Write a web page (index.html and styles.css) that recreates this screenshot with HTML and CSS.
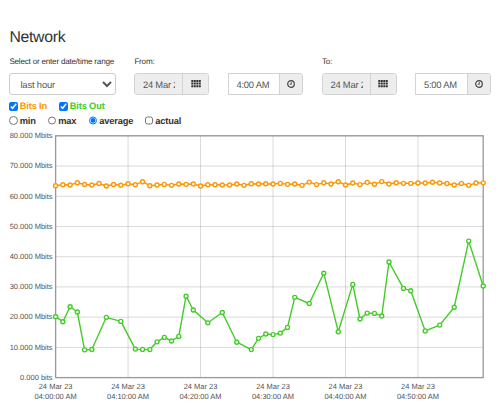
FILE: index.html
```html
<!DOCTYPE html>
<html lang="en">
<head>
    <meta charset="UTF-8">
    <meta name="viewport" content="width=device-width, initial-scale=1.0">
    <title>Network</title>
    <link rel="stylesheet" href="styles.css">
</head>
<body>
    <svg class="sprite">
        <symbol id="calendar" viewBox="0 0 10 8">
            <path d="M0.3 0h2v2h-2zM2.8 0h2v2h-2zM5.3 0h2v2h-2zM7.8 0h2v2h-2zM0.3 2.6h2v2h-2zM2.8 2.6h2v2h-2zM5.3 2.6h2v2h-2zM7.8 2.6h2v2h-2zM0.3 5.2h2v2h-2zM2.8 5.2h2v2h-2zM5.3 5.2h2v2h-2zM7.8 5.2h2v2h-2z" fill="#333"/>
        </symbol>
        <symbol id="clock" viewBox="0 0 8 8">
            <circle cx="4" cy="4" r="3.3" fill="none" stroke="#444" stroke-width="1.2"/>
            <path d="M4.3 1.9v2.4H2.7" fill="none" stroke="#444" stroke-width="0.9"/>
        </symbol>
    </svg>

    <div class="container">
        <h1>Network</h1>
        <form id="rangeForm">
            <div class="field range">
                <label for="range">Select or enter date/time range</label>
                <select id="range"><option>last hour</option></select>
            </div>
            <div class="field from">
                <label for="fromDate">From:</label>
                <div class="inputs">
                    <div class="group date">
                        <input type="text" id="fromDate" value="24 Mar 2023" readonly>
                        <span class="addon"><svg class="cal"><use href="#calendar"/></svg></span>
                    </div>
                    <div class="group time">
                        <input type="text" value="4:00 AM">
                        <span class="addon"><svg class="clk"><use href="#clock"/></svg></span>
                    </div>
                </div>
            </div>
            <div class="field to">
                <label for="toDate">To:</label>
                <div class="inputs">
                    <div class="group date">
                        <input type="text" id="toDate" value="24 Mar 2023" readonly>
                        <span class="addon"><svg class="cal"><use href="#calendar"/></svg></span>
                    </div>
                    <div class="group time">
                        <input type="text" value="5:00 AM">
                        <span class="addon"><svg class="clk"><use href="#clock"/></svg></span>
                    </div>
                </div>
            </div>
        </form>

        <div class="options series">
            <label class="bits-in"><input type="checkbox" checked>Bits In</label>
            <label class="bits-out"><input type="checkbox" checked>Bits Out</label>
        </div>
        <div class="options mode">
            <label class="min"><input type="radio" name="mode">min</label>
            <label class="max"><input type="radio" name="mode">max</label>
            <label class="average"><input type="radio" name="mode" checked>average</label>
            <label class="actual"><input type="checkbox">actual</label>
        </div>
    </div>

    <svg class="chart" id="chart" viewBox="0 130 500 273"></svg>

    <script src="chart.js"></script>
</body>
</html>
```
FILE: styles.css
```css
body {
    font-family: "Liberation Sans", Arial, sans-serif;
    background-color: #fff;
    color: #333;
    margin: 0;
    height: 403px;
    overflow: hidden;
    text-rendering: geometricPrecision;
}
.sprite {
    display: none;
}
.container {
    height: 130px;
    padding: 27px 0 0 9.4px;
    box-sizing: border-box;
}
h1 {
    margin: 0;
    padding-top: 1px;
    font-size: 15.8px;
    letter-spacing: -0.3px;
    font-weight: normal;
    line-height: 20px;
}
form {
    display: flex;
    margin-top: 8px;
}
.field label {
    display: block;
    font-size: 8.1px;
    letter-spacing: -0.21px;
    line-height: 11px;
    margin-bottom: 6px;
    white-space: nowrap;
}
.range {
    width: 125px;
}
.from {
    width: 187.5px;
}
.inputs {
    display: flex;
}
.group {
    display: flex;
    height: 22px;
    box-sizing: border-box;
    border: 1px solid #d3d3d3;
    border-radius: 3px;
    overflow: hidden;
}
.date {
    width: 75px;
    margin-right: 18.5px;
}
.time {
    width: 75.5px;
    border-radius: 0 3px 3px 0;
}
select {
    width: 107px;
    height: 22px;
    padding: 0 0 0 6px;
    border: 1px solid #ccc;
    border-radius: 3px;
    background-color: #fff;
    color: #555;
    font: 9.4px "Liberation Sans", Arial, sans-serif;
    letter-spacing: -0.15px;
    text-rendering: geometricPrecision;
    display: block;
}
input[type="text"] {
    flex: 1;
    min-width: 0;
    padding: 0 7px 0 7.5px;
    border: none;
    color: #555;
    background-color: #fff;
    font: 9.4px "Liberation Sans", Arial, sans-serif;
    letter-spacing: -0.2px;
    text-rendering: geometricPrecision;
}
.date input[type="text"] {
    background-color: #ededed;
}
.addon {
    width: 22px;
    display: flex;
    align-items: center;
    justify-content: center;
    border-left: 1px solid #d3d3d3;
    background-color: #ededed;
}
.date .addon {
    width: 25px;
}
.cal {
    width: 10px;
    height: 8px;
    margin-bottom: 1px;
}
.clk {
    width: 8px;
    height: 8px;
}
.options {
    display: flex;
    font-size: 9.3px;
    letter-spacing: -0.15px;
    font-weight: bold;
    line-height: 14px;
}
.options label {
    display: flex;
    align-items: center;
    white-space: nowrap;
}
.options input {
    width: 8.5px;
    height: 8.5px;
    margin: 0 1.8px 0 0;
}
.mode {
    padding-top: 0.8px;
}
.mode input {
    margin-bottom: 1.5px;
}
.series {
    margin-top: 4.4px;
}
.bits-in {
    width: 50px;
    color: #ff9500;
}
.bits-out {
    color: #43cb27;
}
.min {
    width: 38.5px;
}
.max {
    width: 41px;
}
.average {
    width: 56px;
}
.chart {
    display: block;
    width: 500px;
    height: 273px;
}
.chart text {
    font-size: 7.5px;
    fill: #545454;
}
.grid {
    stroke: #000;
    stroke-opacity: 0.15;
    stroke-width: 1;
}
.frame {
    fill: none;
    stroke: #999;
    stroke-width: 1.3;
}
.line {
    fill: none;
    stroke-width: 1.4;
    stroke-linejoin: round;
}
.dot {
    fill: #fff;
    stroke-width: 1.35;
}
.in {
    stroke: #ff9500;
}
.out {
    stroke: #43cb27;
}
```
FILE: chart.js
```js
const chart = document.getElementById('chart');
const left = 55.6, right = 483.2, top0 = 135.8, bottom = 377.6;
const step = (right - left) / 59;

// one y per minute
const bitsIn = [
    185.7, 184.7, 185, 182.7, 184.5, 185, 183.5, 186, 184.5, 185.2,
    183.7, 184.7, 181.7, 185.7, 185, 184.4, 185.3, 184, 184.3, 184,
    186, 184.7, 184.7, 185, 185, 184, 185.3, 183.7, 184, 183.7,
    184, 183.4, 184.3, 184, 185.3, 182.1, 184.6, 182.7, 184, 181.7,
    185, 183, 184.6, 182.3, 184.2, 181.6, 184, 182.7, 183.3, 183.3,
    183, 183, 182.2, 183, 183.5, 185, 183.4, 185.3, 183, 182.8
];

// [minute, y], minutes without data are skipped
const bitsOut = [
    [0, 316.7], [1, 321.7], [2, 306.7], [3, 312], [4, 349.8], [5, 349.5],
    [7, 317.3], [9, 321.4], [11, 349.1], [12, 349.4], [13, 349.6], [14, 341.8],
    [15, 337.4], [16, 341], [17, 336.4], [18, 296.2], [19, 310], [21, 322.8],
    [23, 312.5], [25, 342.2], [27, 349.6], [28, 338.3], [29, 334], [30, 334.6],
    [31, 333.1], [32, 327.4], [33, 297.3], [35, 303.5], [37, 273.2], [39, 331.7],
    [41, 284.4], [42, 319], [43, 313.1], [44, 313.4], [45, 316], [46, 262],
    [48, 288.4], [49, 290.7], [51, 330.9], [53, 325.1], [55, 307.2], [57, 241.1], [59, 286]
];

let html = '';

for (let i = 0; i <= 8; i++) {
    const y = bottom - i * (bottom - top0) / 8;
    html += `<line class="grid" x1="${left}" x2="${right}" y1="${y}" y2="${y}"/>`;
    html += `<text x="52.6" y="${y + 2.3}" text-anchor="end">${i ? i * 10 + '.000 Mbits' : '0.000 bits'}</text>`;
}

for (let i = 0; i < 6; i++) {
    const x = left + i * 10 * step;
    html += `<line class="grid" x1="${x}" x2="${x}" y1="${top0}" y2="${bottom}"/>`;
    html += `<text x="${x}" y="388.5" text-anchor="middle">24 Mar 23</text>`;
    html += `<text x="${x}" y="399.3" text-anchor="middle">04:${i}0:00 AM</text>`;
}

html += `<rect class="frame" x="${left}" y="${top0}" width="${right - left}" height="${bottom - top0}"/>`;

function drawSeries(points, name) {
    const xy = points.map(([m, y]) => [left + m * step, y]);
    html += `<polyline class="line ${name}" points="${xy.join(' ')}"/>`;
    xy.forEach(([x, y]) => {
        html += `<circle class="dot ${name}" cx="${x}" cy="${y}" r="2"/>`;
    });
}

drawSeries(bitsIn.map((y, m) => [m, y]), 'in');
drawSeries(bitsOut, 'out');

chart.innerHTML = html;
```
